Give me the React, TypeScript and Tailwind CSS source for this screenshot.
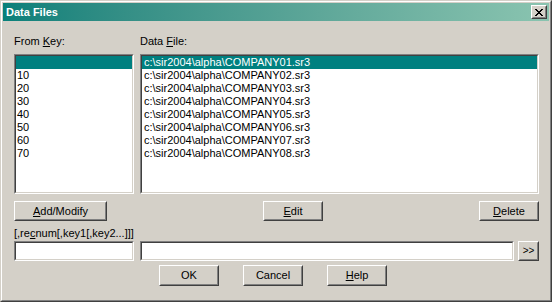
import React from 'react';

const font = { fontFamily: "'Liberation Sans', Arial, sans-serif" };

const files = [1, 2, 3, 4, 5, 6, 7, 8].map(n => `c:\\sir2004\\alpha\\COMPANY0${n}.sr3`);
const keys = ['', '10', '20', '30', '40', '50', '60', '70'];

// raised 3D button, Win2000 style
const Btn = ({ className = '', children }: { className?: string; children: React.ReactNode }) => (
  <div className={`border border-t-white border-l-white border-r-[#404040] border-b-[#404040] bg-[#d4d0c8] ${className}`}>
    <div className="w-full h-full border border-t-[#d4d0c8] border-l-[#d4d0c8] border-r-[#808080] border-b-[#808080] flex items-center justify-center text-[11px] text-black leading-none">
      {children}
    </div>
  </div>
);

// sunken field (listbox / edit)
const Sunken = ({ className = '', children }: { className?: string; children?: React.ReactNode }) => (
  <div className={`border border-t-[#808080] border-l-[#808080] border-r-white border-b-white ${className}`}>
    <div className="w-full h-full border border-t-[#404040] border-l-[#404040] border-r-[#d4d0c8] border-b-[#d4d0c8] bg-white overflow-hidden">
      {children}
    </div>
  </div>
);

const CloseGlyph = () => {
  const rows = ['xx....xx', '.xx..xx.', '..xxxx..', '...xx...', '..xxxx..', '.xx..xx.', 'xx....xx'];
  return (
    <svg width="8" height="7" viewBox="0 0 8 7" shapeRendering="crispEdges">
      {rows.map((r, y) =>
        r.split('').map((c, x) => (c === 'x' ? <rect key={`${x}-${y}`} x={x} y={y} width="1" height="1" fill="#000" /> : null))
      )}
    </svg>
  );
};

const App = () => {
  return (
    <div className="w-[552px] h-[302px] border border-t-[#d4d0c8] border-l-[#d4d0c8] border-r-[#404040] border-b-[#404040]" style={font}>
      <div className="w-full h-full border border-t-white border-l-white border-r-[#808080] border-b-[#808080] bg-[#d4d0c8] p-px flex flex-col">
        {/* title bar */}
        <div className="h-[18px] bg-gradient-to-r from-[#07807a] to-[#8ac4b0] flex items-center pl-[3px] pr-[2px]">
          <span className="text-white font-bold text-[11px] leading-none">Data Files</span>
          <Btn className="ml-auto w-[16px] h-[14px]">
            <CloseGlyph />
          </Btn>
        </div>

        <div className="pl-[11px] pr-[10px] flex flex-col">
          {/* labels */}
          <div className="flex mt-[14px] h-[13px] text-[11px] leading-[13px] text-black">
            <div className="w-[126px]">From <u>K</u>ey:</div>
            <div>Data <u>F</u>ile:</div>
          </div>

          {/* lists */}
          <div className="flex gap-[6px] mt-[6px]">
            <Sunken className="w-[120px] h-[140px]">
              {keys.map((k, i) => (
                <div key={i} className={`h-[13px] leading-[13px] text-[11px] pl-[1px] ${i === 0 ? 'bg-[#008080] text-white' : 'text-black'}`}>{k}</div>
              ))}
            </Sunken>
            <Sunken className="w-[399px] h-[140px]">
              {files.map((f, i) => (
                <div key={i} className={`h-[13px] leading-[13px] text-[11px] pl-[2px] ${i === 0 ? 'bg-[#008080] text-white' : 'text-black'}`}>{f}</div>
              ))}
            </Sunken>
          </div>

          {/* action buttons */}
          <div className="flex mt-[7px] w-[525px]">
            <Btn className="w-[93px] h-[20px]"><span><u>A</u>dd/Modify</span></Btn>
            <Btn className="ml-[156px] w-[60px] h-[20px]"><span><u>E</u>dit</span></Btn>
            <Btn className="ml-auto w-[60px] h-[20px]"><span><u>D</u>elete</span></Btn>
          </div>

          <div className="mt-[5px] h-[14px] text-[11px] leading-[14px] text-black">[,re<u>c</u>num[,key1[,key2...]]]</div>

          {/* inputs */}
          <div className="flex mt-[1px] w-[525px]">
            <Sunken className="w-[120px] h-[20px]" />
            <Sunken className="ml-[6px] w-[374px] h-[20px]" />
            <Btn className="ml-auto w-[21px] h-[20px]"><span className="text-[10px]">&gt;&gt;</span></Btn>
          </div>

          {/* dialog buttons */}
          <div className="flex mt-[4px] gap-[24px] pl-[145px]">
            <Btn className="w-[60px] h-[21px]">OK</Btn>
            <Btn className="w-[60px] h-[21px]">Cancel</Btn>
            <Btn className="w-[60px] h-[21px]"><span><u>H</u>elp</span></Btn>
          </div>
        </div>
      </div>
    </div>
  );
};

export default App;
